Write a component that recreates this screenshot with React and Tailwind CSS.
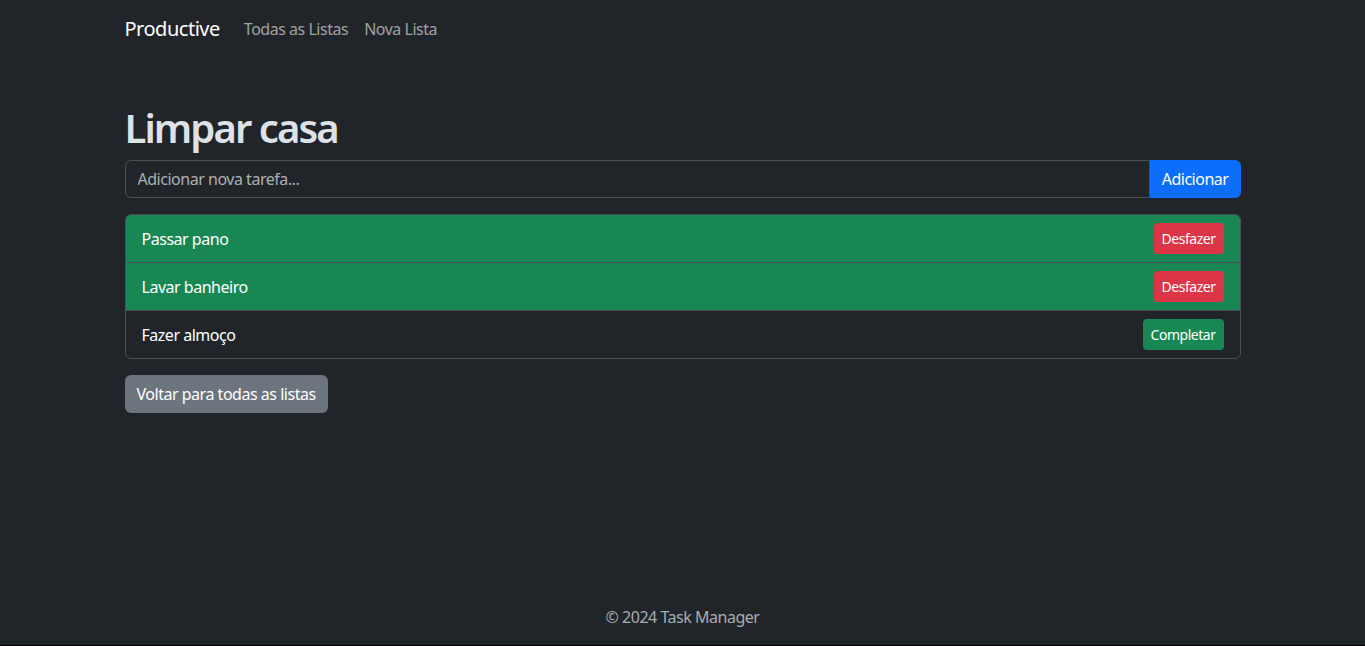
const tasks = [
  { name: "Passar pano", done: true },
  { name: "Lavar banheiro", done: true },
  { name: "Fazer almoço", done: false },
];

const App = () => {
  return (
    <div
      className="bg-black h-[646px] tracking-[-0.03em]"
      style={{ fontFamily: '"Noto Sans", "Open Sans", sans-serif' }}
    >
      <div className="h-[645px] bg-[#212529] text-[#dee2e6] flex flex-col">
        {/* navbar */}
        <nav className="h-[56px] flex items-center">
          <div className="w-[1116px] mx-auto flex items-center pt-[1px]">
            <span className="text-[20px] text-white leading-[30px] mr-4">Productive</span>
            <a className="text-[16px] text-[#a0a2a4] px-2 py-2 leading-6">Todas as Listas</a>
            <a className="text-[16px] text-[#a0a2a4] px-2 py-2 leading-6">Nova Lista</a>
          </div>
        </nav>

        <main className="w-[1116px] mx-auto mt-12">
          <h1 className="text-[40px] leading-[48px] font-semibold tracking-[-0.048em] mb-2">Limpar casa</h1>

          <div className="flex h-[38px] mb-4">
            <input
              className="flex-1 bg-[#212529] border border-[#495057] rounded-l-md px-3 text-[16px] text-[#dee2e6] placeholder:text-[#adb0b3] outline-none"
              placeholder="Adicionar nova tarefa..."
            />
            <button className="bg-[#0d6efd] text-white px-3 text-[16px] rounded-r-md">Adicionar</button>
          </div>

          <ul className="border border-[#495057] rounded-md overflow-hidden">
            {tasks.map((task, idx) => (
              <li
                key={idx}
                className={`flex items-center justify-between px-4 ${
                  idx > 0 ? "h-[48px] border-t border-[#495057]" : "h-[47px]"
                } ${task.done ? "bg-[#198754] text-white" : "text-white"}`}
              >
                <span className="text-[16px] pt-[1px]">{task.name}</span>
                {task.done ? (
                  <button className="bg-[#dc3545] text-white text-[14px] h-[31px] px-2 rounded">Desfazer</button>
                ) : (
                  <button className="bg-[#198754] text-white text-[14px] h-[31px] px-2 rounded">Completar</button>
                )}
              </li>
            ))}
          </ul>

          <button className="mt-4 bg-[#6c757d] text-white text-[16px] h-[38px] px-3 rounded-md">
            Voltar para todas as listas
          </button>
        </main>

        <footer className="mt-auto text-center pt-[16px] pb-[16px] text-[16px] leading-6 text-[#a9acaf]">
          © 2024 Task Manager
        </footer>
      </div>
    </div>
  );
};

export default App;
